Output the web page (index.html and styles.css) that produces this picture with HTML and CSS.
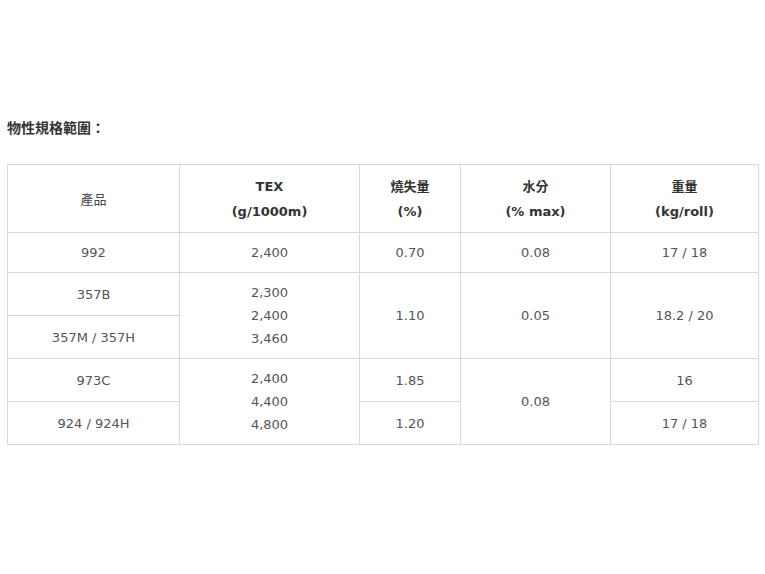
FILE: index.html
```html
<!DOCTYPE html>
<html lang="zh-Hant">
<head>
<meta charset="utf-8">
<link rel="stylesheet" href="styles.css">
</head>
<body>
<div class="page">
  <p class="title">物性規格範圍：</p>
  <table class="spec">
    <colgroup>
      <col class="c1"><col class="c2"><col class="c3"><col class="c4"><col class="c5">
    </colgroup>
    <thead>
      <tr>
        <th class="plain">產品</th>
        <th>TEX<br>(g/1000m)</th>
        <th>燒失量<br>(%)</th>
        <th>水分<br>(% max)</th>
        <th>重量<br>(kg/roll)</th>
      </tr>
    </thead>
    <tbody>
      <tr>
        <td>992</td><td>2,400</td><td>0.70</td><td>0.08</td><td>17 / 18</td>
      </tr>
      <tr>
        <td>357B</td>
        <td rowspan="2">2,300<br>2,400<br>3,460</td>
        <td rowspan="2">1.10</td>
        <td rowspan="2">0.05</td>
        <td rowspan="2">18.2 / 20</td>
      </tr>
      <tr>
        <td>357M / 357H</td>
      </tr>
      <tr>
        <td>973C</td>
        <td rowspan="2">2,400<br>4,400<br>4,800</td>
        <td>1.85</td>
        <td rowspan="2">0.08</td>
        <td>16</td>
      </tr>
      <tr>
        <td>924 / 924H</td>
        <td>1.20</td>
        <td>17 / 18</td>
      </tr>
    </tbody>
  </table>
</div>
</body>
</html>
```
FILE: styles.css
```css
html, body {
  margin: 0;
  padding: 0;
  background: #fff;
}
.page {
  padding: 117px 7px 0 7px;
  font-family: "DejaVu Sans", Verdana, "Noto Sans CJK TC", sans-serif;
  font-size: 13px;
  color: #555;
}
.title {
  margin: 0 0 24px 0;
  line-height: 23px;
  font-size: 14px;
  font-family: "DejaVu Sans", "Noto Sans CJK TC", sans-serif;
  font-weight: 600;
  color: #333;
}
.spec {
  border-collapse: collapse;
  width: 751px;
  table-layout: fixed;
}
.c1 { width: 172px; }
.c2 { width: 180px; }
.c3 { width: 101px; }
.c4 { width: 150px; }
.c5 { width: 148px; }
.spec th, .spec td {
  border: 1px solid #d9d9d9;
  text-align: center;
  vertical-align: middle;
  line-height: 23px;
  padding: 8px 6px;
}
.spec th {
  line-height: 25px;
  padding: 9px 6px 8px;
  font-weight: bold;
  color: #333;
}
.spec th.plain {
  font-weight: normal;
  color: #444;
}
```
